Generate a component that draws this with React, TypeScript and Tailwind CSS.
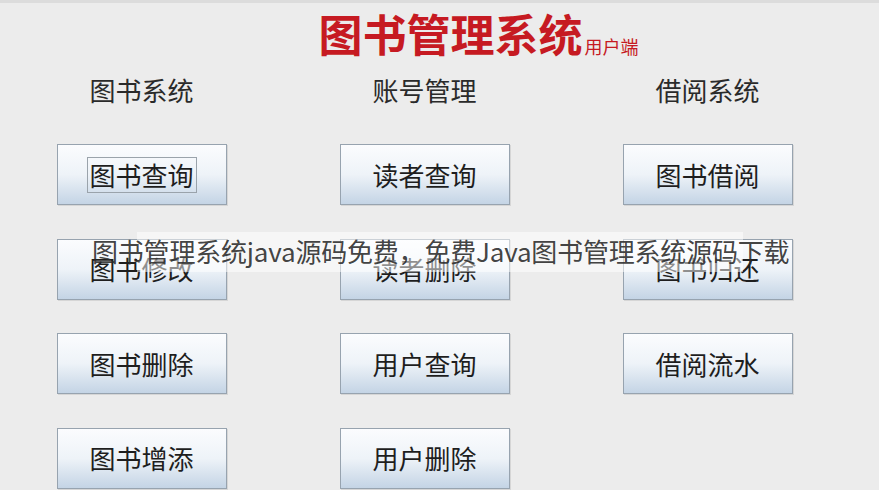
const columns = [
  { title: "图书系统", items: ["图书查询", "图书修改", "图书删除", "图书增添"] },
  { title: "账号管理", items: ["读者查询", "读者删除", "用户查询", "用户删除"] },
  { title: "借阅系统", items: ["图书借阅", "图书归还", "借阅流水"] },
];

const cjk = { fontFamily: '"Noto Sans CJK SC", "Noto Sans", sans-serif' };

const MenuButton = ({ label, focused }: { label: string; focused?: boolean }) => {
  return (
    <button className="flex h-[61px] w-[170px] items-center justify-center border border-[#97a3af] bg-gradient-to-b from-[#fbfcfe] via-[#eef3f8] to-[#c4d4e5] text-[26px] leading-none text-[#1e1e1e] shadow-[1px_1px_0_#d6d6d6]">
      {focused ? (
        <span className="flex h-[36px] w-[110px] items-center justify-center border border-[#9aa3ab]">
          {label}
        </span>
      ) : (
        label
      )}
    </button>
  );
};

const App = () => {
  return (
    <div className="relative h-[490px] w-[879px] overflow-hidden bg-[#ececec]" style={cjk}>
      <div className="h-[3px] bg-[#dcdcdc]" />

      {/* title */}
      <div className="flex items-end justify-center pt-[3px] pl-[78px]">
        <h1 className="text-[44px] font-bold leading-[54px] tracking-[0px] text-[#c61a22]">
          图书管理系统
        </h1>
        <span className="mb-[5px] ml-[2px] text-[18px] leading-none text-[#c61a22]">用户端</span>
      </div>

      <div className="mt-[16px] grid grid-cols-[283px_283px_283px]">
        {columns.map((col) => (
          <div key={col.title} className="flex flex-col items-center">
            <div className="h-[28px] text-[26px] leading-[28px] text-[#2a2a2a]">{col.title}</div>
            <div className="mt-[40px] flex flex-col gap-[33.5px]">
              {col.items.map((item, i) => (
                <MenuButton key={item} label={item} focused={col.title === "图书系统" && i === 0} />
              ))}
            </div>
          </div>
        ))}
      </div>

      {/* watermark caption */}
      <div className="absolute left-[137px] top-[232px] h-[40px] w-[606px] bg-white/50" />
      <div className="absolute left-[92px] top-[234px] whitespace-nowrap text-[26px] leading-[34px] tracking-[-0.2px] text-[#2b2b2b]/90">
        图书管理系统java源码免费，免费Java图书管理系统源码下载
      </div>
    </div>
  );
};

export default App;
